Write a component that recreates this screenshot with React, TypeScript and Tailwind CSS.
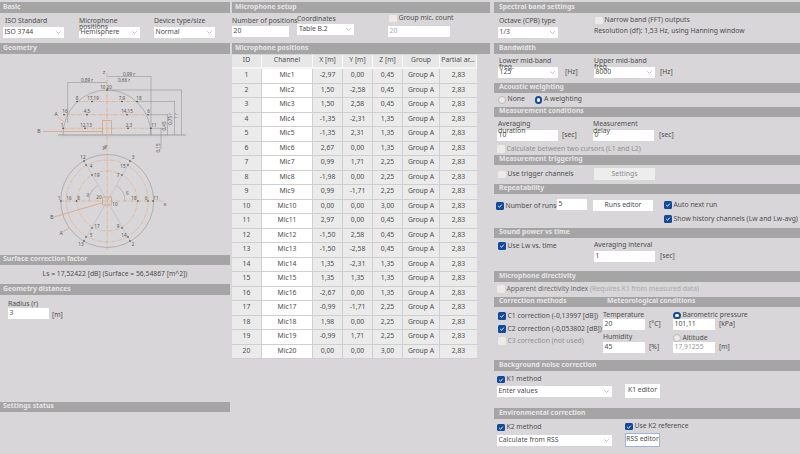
import React from "react";

const Hdr = ({ children, className = "" }: { children?: React.ReactNode; className?: string }) => (
  <div className={`flex items-center h-[10.5px] shrink-0 bg-[#a6a5a6] pl-[3px] text-[#e6e5e6] font-bold text-[6.8px] leading-none ${className}`}>{children}</div>
);
const Sel = ({ v, className = "" }: { v: string; className?: string }) => (
  <div className={`flex items-center justify-between bg-white h-[11px] pl-[1.5px] pr-[3px] ${className}`}>
    <span>{v}</span>
    <svg width="5" height="3" viewBox="0 0 5 3"><path d="M0.3 0.3L2.5 2.5L4.7 0.3" fill="none" stroke="#9a9a9a" strokeWidth="0.6" /></svg>
  </div>
);
const Inp = ({ v, className = "" }: { v: string; className?: string }) => (
  <div className={`flex items-center bg-white h-[11px] pl-[1.5px] ${className}`}>{v}</div>
);
const Chk = ({ on = false }: { on?: boolean }) => (
  <span className={`inline-flex items-center justify-center w-[7.5px] h-[7.5px] rounded-[1.5px] shrink-0 ${on ? "bg-[#0f4a9c]" : "bg-[#ecebe8]"}`}>
    {on && <svg width="6" height="6" viewBox="0 0 6 6"><path d="M1.2 3L2.5 4.3L4.8 1.6" fill="none" stroke="#fff" strokeWidth="0.9" /></svg>}
  </span>
);
const Rad = ({ on = false }: { on?: boolean }) => (
  <span className={`inline-block w-[7.5px] h-[7.5px] rounded-full shrink-0 ${on ? "bg-white border-[2px] border-[#0f4a9c]" : "bg-[#ecebe8] border-[0.5px] border-[#bbb]"}`} />
);
const CL = ({ on, children, className = "" }: { on?: boolean; children?: React.ReactNode; className?: string }) => (
  <div className={`flex items-center gap-[2px] h-[8px] ${className}`}><Chk on={on} /><span>{children}</span></div>
);
const Btn = ({ children, className = "" }: { children?: React.ReactNode; className?: string }) => (
  <div className={`flex items-center justify-center bg-white ${className}`}>{children}</div>
);

const xs = ["-2,97","1,50","1,50","-1,35","-1,35","2,67","0,99","-1,98","0,99","0,00","2,97","-1,50","-1,50","1,35","1,35","-2,67","-0,99","1,98","-0,99","0,00"];
const ys = ["0,00","-2,58","2,58","-2,31","2,31","0,00","1,71","0,00","-1,71","0,00","0,00","2,58","-2,58","-2,31","1,35","0,00","-1,71","0,00","1,71","0,00"];
ys[14] = "1,35";
const zs = ["0,45","0,45","0,45","1,35","1,35","1,35","2,25","2,25","2,25","3,00","0,45","0,45","0,45","1,35","1,35","1,35","2,25","2,25","2,25","3,00"];

const T = ({ x, y, t, s = 4.6, c = "#555", r }: { x: number; y: number; t: string; s?: number; c?: string; r?: number }) => (
  <text x={x} y={y} fontSize={s} fill={c} textAnchor="middle" transform={r ? `rotate(${r} ${x} ${y})` : undefined}>{t}</text>
);
const O = "#e09a66";
const D = ({ p }: { p: [number, number][] }) => <>{p.map(([x, y], i) => <circle key={i} cx={x} cy={y} r="0.7" fill="#222" />)}</>;

const Diagram = () => {
  const hatch = [];
  for (let x = 60; x < 166; x += 2.5) hatch.push(<path key={x} d={`M${x} 137L${x + 2.5} 134.3`} stroke="#aaa" strokeWidth="0.3" />);
  return (
    <svg className="block" width="230" height="201" viewBox="0 53 230 201">
      {hatch}
      <path d="M58 134H186" stroke="#666" strokeWidth="0.5" />
      <path d="M63 134A44 45 0 0 1 151 134" fill="none" stroke="#888" strokeWidth="0.5" />
      <path d="M107 72V145M77 100.5H137M64 113.7H148M63 127.3H151" stroke={O} strokeWidth="0.5" strokeDasharray="4 1 1 1" />
      <path d="M102.5 133.5V119.5H111.5V133.5" fill="none" stroke={O} strokeWidth="0.7" />
      <path d="M43 130.5H102" stroke={O} strokeWidth="0.7" />
      <path d="M58 116L64 121" stroke={O} strokeWidth="0.6" />
      <path d="M151 75.5H108M107 81.5H68M67.7 81V122M151 75V134M107 89H182M137 100.5H175M148 113.7H168M151 127.3H163M181.5 89V134M174.5 100.5V134M167.5 113.7V134M161 127.3V148" fill="none" stroke="#777" strokeWidth="0.4" />
      <T x={104} y={73} t="z" s={5.5} /><T x={129} y={75} t="0,99  r" /><T x={87} y={81} t="0,89  r" /><T x={124} y={81} t="0,66  r" />
      <T x={106} y={88} t="10 20" /><T x={77} y={99} t="8" /><T x={93} y={99} t="17,19" /><T x={122} y={99} t="7,9" /><T x={139} y={99} t="18" />
      <T x={65} y={112} t="16" /><T x={87} y={112} t="4,5" /><T x={127} y={112} t="14,15" /><T x={148.5} y={112} t="6" />
      <T x={62} y={126} t="1" /><T x={86} y={126} t="12,13" /><T x={129} y={126} t="2,3" /><T x={154} y={126} t="11" />
      <T x={56} y={115} t="A" s={5} /><T x={39} y={132} t="B" s={5} />
      <T x={178} y={115} t="1  r" r={-90} /><T x={172} y={118} t="0,75  r" r={-90} /><T x={165.5} y={125} t="0,45" r={-90} /><T x={159.5} y={147} t="0,15" r={-90} />
      <T x={104} y={148} t="y" s={5.5} />
      <D p={[[63,127.3],[85,127.3],[128,127.3],[151,127.3],[64,113.7],[87,113.7],[127,113.7],[148,113.7],[77,100.5],[92,100.5],[122,100.5],[137,100.5],[107,89]]} />

      <circle cx="107.2" cy="200" r="46.5" fill="none" stroke="#888" strokeWidth="0.5" />
      <circle cx="107.2" cy="200" r="41" fill="none" stroke={O} strokeWidth="0.45" strokeDasharray="4 1 1 1" />
      <circle cx="107.2" cy="200" r="30" fill="none" stroke={O} strokeWidth="0.45" strokeDasharray="4 1 1 1" />
      <path d="M60 200H165M107.2 147V250" stroke={O} strokeWidth="0.5" strokeDasharray="4 1 1 1" />
      <path d="M84 160L130.4 240M130.4 160L84 240" stroke="#aaa" strokeWidth="0.4" />
      <path d="M89 200A18 18 0 0 1 97 185M125 200A18 18 0 0 0 117 185" fill="none" stroke="#888" strokeWidth="0.4" />
      <rect x="102.7" y="196" width="8.8" height="8" fill="none" stroke={O} strokeWidth="0.7" />
      <path d="M54 216L103 201.5M62 231L69 227.5" stroke={O} strokeWidth="0.7" />
      <T x={106} y={147} t="y" s={5.5} /><T x={165} y={205} t="x" s={5.5} /><T x={89} y={194} t="60" s={3.5} r={-80} /><T x={126} y={192} t="60" s={3.5} r={80} />
      <T x={83} y={158} t="12" /><T x={133} y={158} t="3" /><T x={91} y={167} t="4" /><T x={123} y={167} t="15" /><T x={97} y={176} t="19" /><T x={118} y={176} t="7" />
      <T x={59} y={199} t="1" /><T x={69} y={199} t="16" /><T x={78.5} y={199} t="8" /><T x={99} y={198} t="20" /><T x={115} y={205} t="10" /><T x={134} y={199} t="18" /><T x={146} y={199} t="6" /><T x={156} y={199} t="11" />
      <T x={97} y={227} t="17" /><T x={118} y={227} t="9" /><T x={91} y={236} t="5" /><T x={124} y={236} t="14" /><T x={81} y={245} t="13" /><T x={133} y={245} t="2" />
      <T x={52} y={218} t="B" s={5} /><T x={61} y={234} t="A" s={5} />
      <D p={[[84,160],[130,160],[86,164],[128,164],[92,174],[122,174],[61,200],[76.5,200],[138,200],[148,200],[153,200],[92,227],[122,227],[86,236],[128,236],[84,240],[130,240]]} />
    </svg>
  );
};

export default function App() {
  return (
    <div className="flex w-[800px] h-[454px] overflow-hidden bg-[#d8d6d8] pt-[2px] text-[#4d4d4d] text-[6.8px] leading-none font-['Noto_Sans',sans-serif]">
      {/* left */}
      <div className="w-[230px] shrink-0 flex flex-col">
        <Hdr>Basic</Hdr>
        <div className="h-[30.5px] flex pl-[3px] pt-[5px]">
          <div className="w-[61px]"><div className="h-[9px] pl-[2px]">ISO Standard</div><Sel v="ISO 3744" /></div>
          <div className="w-[61px] ml-[15px]"><div className="h-[9px]">Microphone positions</div><Sel v="Hemisphere" /></div>
          <div className="w-[61px] ml-[14px]"><div className="h-[9px]">Device type/size</div><Sel v="Normal" /></div>
        </div>
        <Hdr>Geometry</Hdr>
        <Diagram />
        <Hdr>Surface correction factor</Hdr>
        <div className="h-[19px] flex items-center justify-center">Ls = 17,52422 [dB] (Surface = 56,54867 [m^2])</div>
        <Hdr>Geometry distances</Hdr>
        <div className="h-[107px] pl-[8px] pt-[6px]">
          <div className="h-[7px]">Radius (r)</div>
          <div className="flex items-center gap-[3px]"><Inp v="3" className="w-[41px]" /><span className="mt-[4px]">[m]</span></div>
        </div>
        <Hdr>Settings status</Hdr>
      </div>
      {/* middle */}
      <div className="w-[258px] ml-[2px] shrink-0 flex flex-col">
        <Hdr>Microphone setup</Hdr>
        <div className="h-[30.5px] flex">
          <div className="w-[57px] pt-[5px]"><div className="h-[8px] whitespace-nowrap">Number of positions</div><Inp v="20" /></div>
          <div className="w-[57px] ml-[8px] pt-[3px]"><div className="h-[8px]">Coordinates</div><Sel v="Table B.2" className="pl-[2px]" /></div>
          <div className="ml-[34px] pt-[2px] w-[62px]">
            <CL className="ml-[1px] whitespace-nowrap">Group mic. count</CL>
            <Inp v="20" className="mt-[3px] text-[#aaa]" />
          </div>
        </div>
        <Hdr>Microphone positions</Hdr>
        <div className="w-[245px] pt-[1px] grid grid-cols-[30px_51px_30px_30px_30px_37px_37px] auto-rows-[14.5px] gap-0">
          {["ID", "Channel", "X [m]", "Y [m]", "Z [m]", "Group", "Partial ar..."].map((h) => (
            <div key={h} className="flex items-center justify-center bg-[#e8e7e8] border-r border-[#fafafa] border-b-[2px] border-b-[#f5f5f5]">{h}</div>
          ))}
          {xs.map((x, i) => (
            <React.Fragment key={i}>
              <div className="flex items-center justify-center bg-[#ebebeb] border-r border-b border-[#cfcfcf]">{i + 1}</div>
              <div className="flex items-center justify-center bg-white border-r border-b border-[#cfcfcf]">Mic{i + 1}</div>
              <div className="flex items-center justify-center bg-[#ebebeb] border-r border-b border-[#cfcfcf]">{x}</div>
              <div className="flex items-center justify-center bg-[#ebebeb] border-r border-b border-[#cfcfcf]">{ys[i]}</div>
              <div className="flex items-center justify-center bg-[#ebebeb] border-r border-b border-[#cfcfcf]">{zs[i]}</div>
              <div className="flex items-center justify-center bg-[#ebebeb] border-r border-b border-[#cfcfcf]">Group A</div>
              <div className="flex items-center justify-center bg-[#ebebeb] border-b border-[#cfcfcf]">2,83</div>
            </React.Fragment>
          ))}
        </div>
      </div>
      {/* right */}
      <div className="w-[306px] ml-[4px] shrink-0 flex flex-col">
        <Hdr className="pl-[5px]">Spectral band settings</Hdr>
        <div className="h-[30.5px] flex pl-[4px] pt-[5px]">
          <div className="w-[60px]"><div className="h-[9px] pl-[1px]">Octave (CPB) type</div><Sel v="1/3" /></div>
          <div className="ml-[36px] -mt-[1px]">
            <CL className="ml-[1px]">Narrow band (FFT) outputs</CL>
            <div className="mt-[3px]">Resolution (df): 1,53 Hz, using Hanning window</div>
          </div>
        </div>
        <Hdr className="pl-[5px]">Bandwidth</Hdr>
        <div className="h-[29px] flex pl-[4px] pt-[4px]">
          <div className="w-[60px]"><div className="h-[9px] pl-[1px]">Lower mid-band freq.</div><Sel v="125" /></div>
          <span className="ml-[7px] mt-[11px] w-[29px]">[Hz]</span>
          <div className="w-[61px]"><div className="h-[9px]">Upper mid-band freq.</div><Sel v="8000" /></div>
          <span className="ml-[5px] mt-[11px]">[Hz]</span>
        </div>
        <Hdr className="pl-[5px]">Acoustic weighting</Hdr>
        <div className="h-[13.5px] flex items-center pl-[4px]">
          <Rad /><span className="ml-[2px] w-[27px]">None</span><Rad on /><span className="ml-[2px]">A weighting</span>
        </div>
        <Hdr className="pl-[5px]">Measurement conditions</Hdr>
        <div className="h-[37.5px] pl-[3px] pt-[4px]">
          <div className="flex">
            <div className="w-[61px]"><div className="h-[9px] pl-[1px]">Averaging duration</div><Inp v="10" /></div>
            <span className="ml-[4px] mt-[11px] w-[31px]">[sec]</span>
            <div className="w-[61px]"><div className="h-[9px]">Measurement delay</div><Inp v="0" /></div>
            <span className="ml-[5px] mt-[11px]">[sec]</span>
          </div>
          <CL className="mt-[4px] text-[#8f8f8f]">Calculate between two cursors (L1 and L2)</CL>
        </div>
        <Hdr className="pl-[5px]">Measurement triggering</Hdr>
        <div className="h-[18.5px] flex items-center pl-[4px]">
          <CL className="w-[96px]">Use trigger channels</CL>
          <Btn className="w-[61px] h-[12px] !bg-[#eeeded] text-[#8a8a8a]">Settings</Btn>
        </div>
        <Hdr className="pl-[5px]">Repeatability</Hdr>
        <div className="h-[33.5px] flex pl-[2px] pt-[5px]">
          <CL on className="mt-[3px] w-[61px]">Number of runs</CL>
          <Inp v="5" className="w-[30px]" />
          <Btn className="w-[60px] h-[11px] ml-[6px] mt-[1px]">Runs editor</Btn>
          <div className="ml-[11px] mt-[2px]">
            <CL on>Auto next run</CL>
            <CL on className="mt-[6px]">Show history channels (Lw and Lw-avg)</CL>
          </div>
        </div>
        <Hdr className="pl-[5px]">Sound power vs time</Hdr>
        <div className="h-[33px] flex pl-[4px] pt-[4px]">
          <CL on className="w-[96px]">Use Lw vs. time</CL>
          <div><div className="h-[9px]">Averaging interval</div><div className="flex"><Inp v="1" className="w-[61px]" /><span className="ml-[5px] mt-[2px]">[sec]</span></div></div>
        </div>
        <Hdr className="pl-[5px]">Microphone directivity</Hdr>
        <div className="h-[15px] flex items-center pl-[3px]">
          <CL className="text-[#6a6a6a]">Apparent directivity index <span className="text-[#a8a8a8]">(Requires K1 from measured data)</span></CL>
        </div>
        <Hdr className="pl-[5px]"><span className="w-[108px]">Correction methods</span><span>Meteorological conditions</span></Hdr>
        <div className="h-[53px] flex pl-[4px] pt-[5px]">
          <div className="w-[104px]">
            <CL on>C1 correction (-0,13997 [dB])</CL>
            <CL on className="mt-[5px] whitespace-nowrap">C2 correction (-0,053802 [dB])</CL>
            <CL className="mt-[4px] text-[#8f8f8f]">C3 correction (not used)</CL>
          </div>
          <div className="w-[70px] ml-[1px]">
            <div className="h-[7px]">Temperature</div>
            <div className="flex items-center"><Inp v="20" className="w-[42px]" /><span className="ml-[4px]">[°C]</span></div>
            <div className="h-[8px] mt-[4px]">Humidity</div>
            <div className="flex items-center"><Inp v="45" className="w-[42px]" /><span className="ml-[4px]">[%]</span></div>
          </div>
          <div>
            <div className="flex items-center gap-[2px] h-[7px]"><Rad on />Barometric pressure</div>
            <div className="flex items-center"><Inp v="101,11" className="w-[42px]" /><span className="ml-[4px]">[kPa]</span></div>
            <div className="flex items-center gap-[2px] h-[8px] mt-[4px]"><Rad />Altitude</div>
            <div className="flex items-center"><Inp v="17,91255" className="w-[42px] text-[#999]" /><span className="ml-[4px]">[m]</span></div>
          </div>
        </div>
        <Hdr className="pl-[5px]">Background noise correction</Hdr>
        <div className="h-[37.5px] flex pl-[3px] pt-[5px]">
          <div className="w-[115px]"><CL on>K1 method</CL><Sel v="Enter values" className="mt-[2.5px]" /></div>
          <Btn className="w-[35px] h-[14px] ml-[13px] mt-[8px]">K1 editor</Btn>
        </div>
        <Hdr className="pl-[5px]">Environmental correction</Hdr>
        <div className="flex pl-[3px] pt-[5px]">
          <div className="w-[115px]"><CL on>K2 method</CL><Sel v="Calculate from RSS" className="mt-[3px]" /></div>
          <div className="ml-[13px]"><CL on className="whitespace-nowrap w-[35px] -mt-[1px]">Use K2 reference</CL>
            <Btn className="w-[35px] h-[14px] mt-[2px] border border-[#9fb4d6]">RSS editor</Btn></div>
        </div>
      </div>
    </div>
  );
}
